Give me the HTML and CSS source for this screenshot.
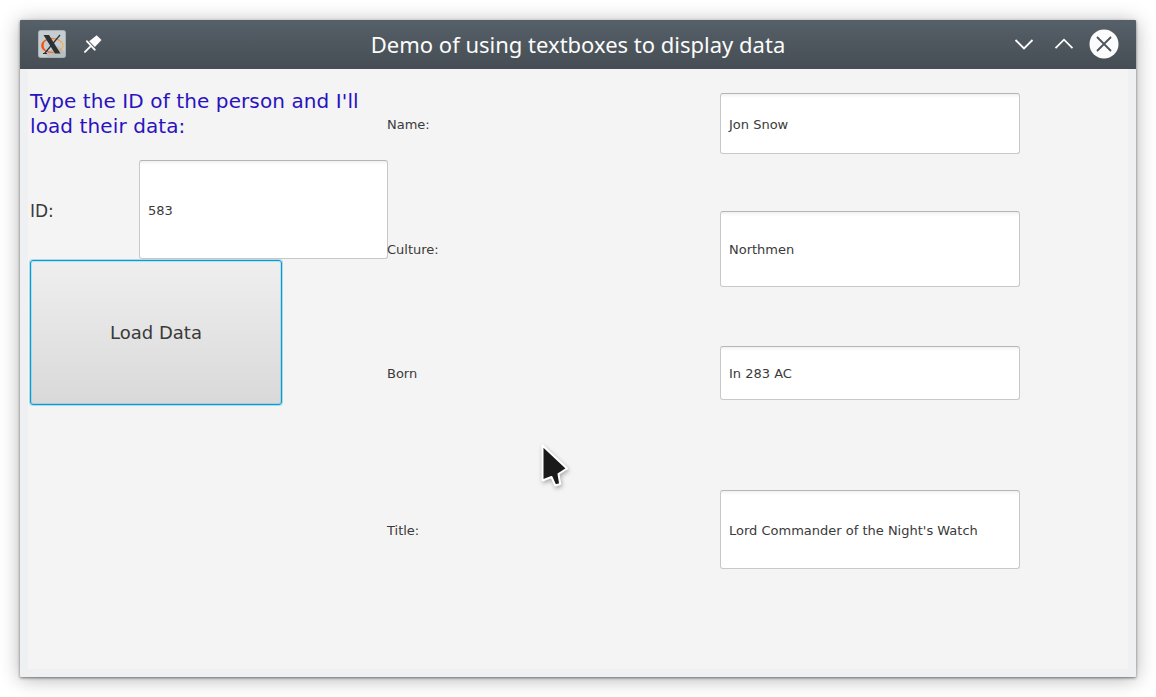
FILE: index.html
```html
<!DOCTYPE html>
<html lang="en">
<head>
<meta charset="utf-8">
<title>Demo of using textboxes to display data</title>
<link rel="stylesheet" href="styles.css">
</head>
<body>
<div class="window">
  <header class="titlebar">
    <div class="title-left">
      <svg class="app-icon" width="28" height="28" viewBox="0 0 28 28">
        <defs>
          <linearGradient id="ring" x1="0" x2="1" y1="0" y2="0">
            <stop offset="0" stop-color="#f4510e"/>
            <stop offset=".5" stop-color="#f0803a"/>
            <stop offset="1" stop-color="#e9b872"/>
          </linearGradient>
        </defs>
        <rect x=".5" y=".5" width="27" height="27" rx="2" fill="#c6cdd1" stroke="#a9b1b5"/>
        <path d="M7 24L20 16L27 22V25.500Q27 27 25.500 27H10Z" fill="#aab2b6" opacity=".5"/>
        <ellipse cx="14.500" cy="15.500" rx="10.500" ry="7" fill="none" stroke="url(#ring)" stroke-width="1.600"/>
        <path d="M4.500 13Q2.500 18 8 21Q4.500 17 6 13Z" fill="#f4510e"/>
        <path d="M5.500 5H11L22.500 23.500H17Z" fill="#2c3134"/>
        <path d="M22 5L6.500 23.500M5 23.500H9" stroke="#2c3134" stroke-width="1.200" fill="none"/>
      </svg>
      <svg class="pin-icon" width="18" height="18" viewBox="0 0 18 18" fill="#fcfcfc">
        <path d="M12.700 .2L17.500 4.900L10.900 12L5.200 6.300Z"/>
        <path d="M1 16.900L6.500 11.400M3 6.300L10.700 14.700" stroke="#fcfcfc" stroke-width="1.900" stroke-linecap="round"/>
      </svg>
    </div>
    <h1 class="title">Demo of using textboxes to display data</h1>
    <div class="title-buttons">
      <svg width="20" height="28" viewBox="0 0 20 28"><path d="M1.500 10L10 18.500L18.500 10"/></svg>
      <svg width="20" height="28" viewBox="0 0 20 28"><path d="M1.500 18.200L10 9.700L18.500 18.200"/></svg>
      <svg width="30" height="30" viewBox="0 0 30 30"><circle cx="15" cy="15" r="14.500"/><path class="cross" d="M8 8L22 22M22 8L8 22"/></svg>
    </div>
  </header>
  <main class="content">
    <section class="lookup">
      <p class="prompt">Type the ID of the person and I'll<br>load their data:</p>
      <div class="id-row">
        <label class="id-label" for="id">ID:</label>
        <div class="field id-field" id="id">583</div>
      </div>
      <button class="load">Load Data</button>
    </section>
    <section class="details">
      <span>Name:</span><div class="field">Jon Snow</div>
      <span>Culture:</span><div class="field">Northmen</div>
      <span>Born</span><div class="field">In 283 AC</div>
      <span>Title:</span><div class="field">Lord Commander of the Night's Watch</div>
    </section>
  </main>
</div>
<svg class="cursor" width="40" height="52" viewBox="0 0 40 52">
  <path d="M6.500 4.500V39.500L15.500 36L19.300 44.500L24.200 43L22.500 33L31 27.500Z" fill="#1a1a1a" stroke="#fff" stroke-width="2" stroke-linejoin="round"/>
</svg>
</body>
</html>
```
FILE: styles.css
```css
* { box-sizing: border-box; }
body {
  margin: 0;
  padding: 20px;
  height: 697px;
  overflow: hidden;
  background: #fff;
  font: 13px "DejaVu Sans", sans-serif;
  color: #3a3a3a;
}
.window {
  width: 1116px;
  height: 657px;
  background: #eff0f1;
  border-radius: 1px;
  box-shadow: 0 1px 3px rgba(0, 0, 0, .5), 0 2px 20px rgba(0, 0, 0, .3);
}
.titlebar {
  height: 49px;
  padding-bottom: 1px;
  display: grid;
  grid-template-columns: 1fr auto 1fr;
  align-items: center;
  background: linear-gradient(#566068, #464d54);
  border-radius: 1px 1px 0 0;
}
.title-left { display: flex; align-items: center; padding-left: 18px; gap: 18px; }
.title {
  margin: 0;
  font: 22px/30px "Noto Sans", sans-serif;
  color: #fcfcfc;
  white-space: nowrap;
}
.title-buttons { display: flex; justify-content: flex-end; align-items: center; gap: 20px; padding-right: 17px; }
.title-buttons svg:nth-child(2) { margin-right: -5px; }
.title-buttons path { fill: none; stroke: #fcfcfc; stroke-width: 1.8; }
.title-buttons circle { fill: #fcfcfc; }
.title-buttons .cross { stroke: #4d565e; stroke-width: 1.9; }
.content {
  margin: 0 8px;
  height: 600px;
  padding-left: 2px;
  display: flex;
  background: #f4f4f4;
}
.lookup { width: 357px; padding-top: 20px; }
.prompt {
  margin: 0;
  height: 71px;
  font-size: 20px;
  line-height: 25px;
  letter-spacing: .1px;
  color: #2a12c0;
  white-space: nowrap;
}
.id-row { display: flex; align-items: center; width: 358px; height: 99px; }
.id-label { width: 109px; font-size: 17px; padding-top: 2px; }
.field {
  display: flex;
  align-items: center;
  padding: 1px 8px 0;
  border: 1px solid #c8c8c8;
  border-top-color: #b5b5b5;
  border-radius: 3px;
  background: linear-gradient(#f1f1f1, #fff 4px);
  white-space: nowrap;
}
.id-field { width: 249px; height: 99px; }
.load {
  display: block;
  width: 252px;
  height: 145px;
  margin: 1px 0 0;
  padding: 0;
  border: 1px solid #039ed3;
  border-radius: 3px;
  background: linear-gradient(#efefef, #d9d9d9);
  box-shadow: 0 0 0 1px rgba(3, 158, 211, .3), inset 0 0 0 1px rgba(3, 158, 211, .2);
  font: 18px "DejaVu Sans", sans-serif;
  color: #3a3a3a;
}
.details {
  display: grid;
  grid-template-columns: 333px 300px;
  grid-template-rows: 61px 57px 76px 59px 54px 90px 79px;
  align-items: center;
  align-content: start;
  padding-top: 24px;
}
.details > :nth-child(-n+2) { grid-row: 1; }
.details > :nth-child(n+3):nth-child(-n+4) { grid-row: 3; }
.details > :nth-child(n+5):nth-child(-n+6) { grid-row: 5; }
.details > :nth-child(n+7) { grid-row: 7; }
.details span { padding-top: 1px; }
.details .field { height: 100%; }
.cursor {
  position: absolute;
  left: 536px;
  top: 441px;
  filter: drop-shadow(1px 2px 2px rgba(0, 0, 0, .3));
}
```
